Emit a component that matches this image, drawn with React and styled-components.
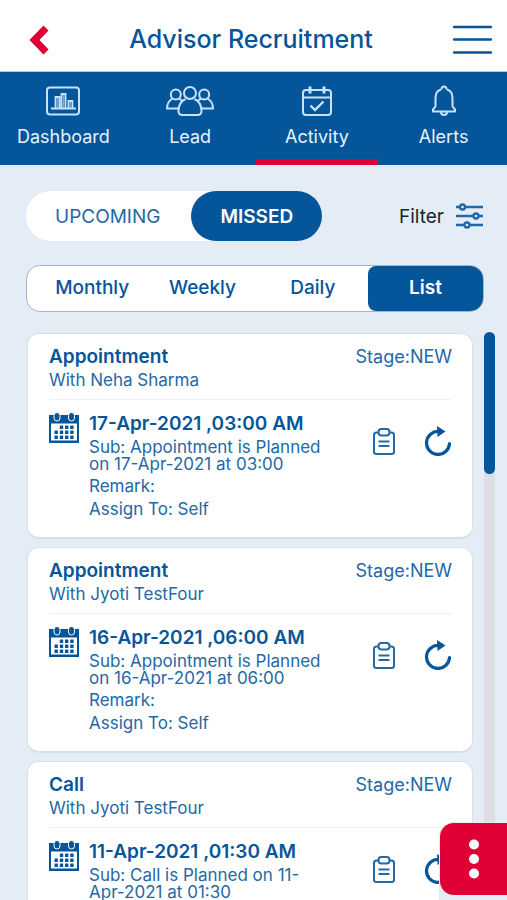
import React from 'react'
import styled, { createGlobalStyle, css } from 'styled-components'

const colors = {
  blue: '#05559b',
  text: '#2468a5',
  red: '#e00036',
  page: '#e4edf6',
  icon: '#c9e2f7',
}

const GlobalStyle = createGlobalStyle`
  * {
    box-sizing: border-box;
  }

  body {
    margin: 0;
    background: ${colors.page};
    color: ${colors.blue};
    font-family: Inter, 'Open Sans', sans-serif;
  }

  button {
    padding: 0;
    border: 0;
    background: none;
    color: inherit;
    font-family: inherit;
    cursor: pointer;
  }

  svg {
    display: block;
  }
`

const StyledPage = styled.div`
  display: flex;
  flex-direction: column;
  height: 100vh;
`

const StyledHeader = styled.header`
  display: flex;
  flex: none;
  align-items: center;
  justify-content: space-between;
  height: 72px;
  padding: 8px 15px 0 29px;
  border-bottom: 1px solid #b4cbe2;
  background: #fff;
`

const StyledTitle = styled.h1`
  margin: 0;
  padding-bottom: 2px;
  font-size: 25px;
  line-height: 28px;
  font-weight: 500;
`

const StyledNav = styled.nav`
  display: grid;
  flex: none;
  grid-template-columns: repeat(4, 1fr);
  height: 93px;
  background: ${colors.blue};
`

const StyledNavLink = styled.a`
  display: flex;
  flex-direction: column;
  align-items: center;
  gap: 8px;
  margin: 0 2px;
  padding-top: 13px;
  border-bottom: 6px solid ${props => (props.$active ? colors.red : 'transparent')};
  color: #e6f2fc;
  font-size: 18px;
  line-height: 24px;
  text-decoration: none;

  svg {
    color: ${colors.icon};
  }
`

const StyledToolbar = styled.div`
  display: flex;
  flex: none;
  align-items: center;
  justify-content: space-between;
  padding: 26px 24px 0 26px;
`

const StyledToggle = styled.div`
  display: flex;
  border-radius: 25px;
  background: #fff;
`

const StyledToggleButton = styled.button`
  height: 50px;
  padding: 0 29px;
  border-radius: 25px;
  font-size: 19px;
  color: ${colors.text};

  ${props =>
    props.$active &&
    css`
      margin-left: 2px;
      background: ${colors.blue};
      color: #fff;
      font-weight: 600;
    `};
`

const StyledFilter = styled.button`
  display: flex;
  align-items: center;
  gap: 12px;
  color: #20242c;
  font-size: 19px;

  svg {
    color: #2168ab;
  }
`

const StyledTabs = styled.div`
  display: grid;
  flex: none;
  grid-template-columns: 1fr 1fr 1fr 115px;
  height: 47px;
  margin: 24px 23px 0 26px;
  padding-left: 10px;
  border: 1px solid #a4b4cb;
  border-radius: 14px;
  background: #fff;
`

const StyledTab = styled.button`
  padding-bottom: 2px;
  font-size: 19px;
  font-weight: 500;

  ${props =>
    props.$active &&
    css`
      border-radius: 8px 13px 13px 8px;
      background: ${colors.blue};
      color: #fff;
      font-weight: 600;
    `};
`

const StyledContent = styled.main`
  display: flex;
  flex: 1;
  gap: 11px;
  min-height: 0;
  margin-top: 20px;
  padding: 0 12px 0 27px;
`

const StyledList = styled.div`
  display: flex;
  flex: 1;
  flex-direction: column;
  gap: 8px;
  min-width: 0;
  padding-top: 1px;
  overflow-y: auto;
  scrollbar-width: none;
`

const StyledTrack = styled.div`
  flex: none;
  width: 11px;
  border-radius: 6px 6px 0 0;
  background: #dcdfe2;
`

const StyledThumb = styled.div`
  height: 25%;
  border-radius: 6px;
  background: ${colors.blue};
`

const StyledCard = styled.article`
  flex: none;
  min-height: 206px;
  padding: 11px 20px 14px 21px;
  border: 1px solid #d9dfe6;
  border-bottom-width: 2px;
  border-radius: 12px;
  background: #fff;
`

const StyledCardHeader = styled.header`
  display: flex;
  justify-content: space-between;
  padding-bottom: 7px;
  border-bottom: 1px solid #f0f3f5;
`

const StyledCardTitle = styled.h2`
  margin: 0;
  font-size: 19px;
  line-height: 24px;
  font-weight: 600;
`

const StyledText = styled.p`
  margin: 0;
  color: ${colors.text};
  font-size: 17px;
  line-height: ${props => (props.$tight ? 17 : 23)}px;
`

const StyledStage = styled.span`
  color: ${colors.text};
  font-size: 18px;
  line-height: 24px;
`

const StyledCardBody = styled.div`
  display: flex;
  padding-top: 12px;
`

const StyledDetails = styled.div`
  flex: 1;
  padding-left: 10px;
`

const StyledDate = styled.h3`
  margin: 0 0 3px;
  font-size: 19px;
  line-height: 24px;
  font-weight: 600;
`

const StyledSubject = styled.div`
  max-width: 242px;
  margin-bottom: 2px;
`

const StyledActions = styled.div`
  display: flex;
  align-items: center;
  align-self: flex-start;
  gap: 29px;
  padding-top: 14px;
`

const StyledMore = styled.div`
  position: fixed;
  right: 0;
  bottom: 0;
  padding: 1px 0 5px 1px;
  border-radius: 14px 0 0 0;
  background: ${colors.page};
`

const StyledMoreButton = styled.button`
  display: grid;
  place-items: center;
  width: 67px;
  height: 72px;
  border-radius: 14px 0 0 14px;
  background: ${colors.red};
`

const Icon = ({ width, height, strokeWidth = 2, children }) => (
  <svg
    width={width}
    height={height}
    viewBox={`0 0 ${width} ${height}`}
    fill="none"
    stroke="currentColor"
    strokeWidth={strokeWidth}
    aria-hidden="true"
  >
    {children}
  </svg>
)

const BackIcon = () => (
  <svg width="20" height="30" viewBox="0 0 20 30" aria-hidden="true">
    <path d="M14.5 0.5 19.5 5.500 10.500 15 19.5 24.500 14.5 29.5 0.5 15Z" fill={colors.red} />
  </svg>
)

const MenuIcon = () => (
  <Icon width={39} height={30} strokeWidth={2.4}>
    <path d="M1 2h37M1 14.5h37M1 27.5h37" strokeLinecap="round" />
  </Icon>
)

const DashboardIcon = () => (
  <Icon width={34} height={32}>
    <rect x="1" y="2.5" width="32" height="27" rx="3" />
    <path d="M5 23.5h25M9.5 23V12h4v11M15.5 23V9h4v14M22.5 23v-7h4v7" strokeWidth="1.8" />
    <path d="M11.5 13v10M17.5 10v13M24.5 17v6" strokeWidth="1.4" opacity="0.6" />
  </Icon>
)

const LeadIcon = () => (
  <Icon width={48} height={32}>
    <circle cx="24" cy="8" r="6" />
    <circle cx="9.8" cy="9.500" r="5" />
    <circle cx="38.2" cy="9.500" r="5" />
    <path d="M19.500 14C15 16 12.5 20.500 12.5 26c0 2.5 1.5 4 4 4h15c2.500 0 4-1.500 4-4 0-5.500-2.500-10-7-12" />
    <path d="M6.500 13.500C3 15.500 1 18.500 1 23.500h11.500M13 13.500l4 3M41.500 13.500C45 15.500 47 18.500 47 23.500H35.500M35 13.500l-4 3" />
  </Icon>
)

const ActivityIcon = () => (
  <Icon width={30} height={32}>
    <rect x="1" y="5" width="28" height="25" rx="3" />
    <path d="M1 12.500h28" />
    <path d="M8 1.500v7M22 1.500v7" strokeWidth="3" />
    <path d="M8.500 20.500l4.500 4.500 8.500-8.500" strokeWidth="2.400" />
  </Icon>
)

const AlertsIcon = () => (
  <Icon width={26} height={32}>
    <path
      d="M10 4.500C6.500 5.500 4.500 9 4.500 13v8c0 1.500-2 2-2.500 3.500v2h22v-2c-.5-1.500-2.500-2-2.500-3.500v-8c0-4-2-7.500-5.500-8.500M10.500 4.500c0-4 5-4 5 0M10 27c0 4 6 4 6 0"
      strokeLinejoin="round"
    />
  </Icon>
)

const FilterIcon = () => (
  <Icon width={27} height={26} strokeWidth={2.4}>
    <path d="M0 4h4M9 4h18M0 13h17M23 13h4M0 22h8M14 22h13" />
    <circle cx="6.500" cy="4" r="2.500" />
    <circle cx="20" cy="13" r="2.500" />
    <circle cx="11" cy="22" r="2.500" />
  </Icon>
)

const CalendarIcon = () => (
  <svg width="30" height="32" viewBox="0 0 30 32" fill={colors.blue} aria-hidden="true">
    <path d="M0 3h30v28H0zM2 11.500v17h26v-17z" fillRule="evenodd" />
    <rect x="5" y="0.500" width="6" height="8.500" rx="3" stroke="#fff" />
    <rect x="19.500" y="0.500" width="6" height="8.500" rx="3" stroke="#fff" />
    {[13.5, 18.5, 23.5].map((y, row) =>
      [5.5, 10.8, 16, 21.2]
        .slice(row === 0 ? 1 : 0)
        .map(x => <rect key={`${x}-${y}`} x={x} y={y} width="3.400" height="3.400" rx="0.5" />)
    )}
  </svg>
)

const ClipboardIcon = () => (
  <Icon width={22} height={27}>
    <path
      d="M6 4.500H3.500C2 4.500 1 5.500 1 7v17c0 1.500 1 2 2.500 2h15c1.500 0 2.500-.5 2.500-2V7c0-1.500-1-2.500-2.500-2.500H16"
      stroke={colors.text}
    />
    <rect x="5.500" y="1" width="11" height="6.500" rx="3" stroke={colors.text} />
    <path d="M5.500 13.500h11M5.500 18h11" stroke={colors.text} />
  </Icon>
)

const RefreshIcon = () => (
  <Icon width={28} height={30} strokeWidth={3.2}>
    <path d="M15 5.500A11.500 11.500 0 1 0 25.500 17.500" strokeLinecap="round" />
    <path d="M13 0 21.500 5.500 13.500 11Z" fill="currentColor" stroke="none" />
  </Icon>
)

const navItems = [
  { label: 'Dashboard', icon: DashboardIcon },
  { label: 'Lead', icon: LeadIcon },
  { label: 'Activity', icon: ActivityIcon },
  { label: 'Alerts', icon: AlertsIcon },
]

const activities = [
  {
    title: 'Appointment',
    person: 'Neha Sharma',
    date: '17-Apr-2021 ,03:00 AM',
    subject: 'Appointment is Planned on 17-Apr-2021 at 03:00',
  },
  {
    title: 'Appointment',
    person: 'Jyoti TestFour',
    date: '16-Apr-2021 ,06:00 AM',
    subject: 'Appointment is Planned on 16-Apr-2021 at 06:00',
  },
  {
    title: 'Call',
    person: 'Jyoti TestFour',
    date: '11-Apr-2021 ,01:30 AM',
    subject: 'Call is Planned on 11-Apr-2021 at 01:30',
  },
]

const ActivityCard = ({ title, person, date, subject }) => (
  <StyledCard>
    <StyledCardHeader>
      <div>
        <StyledCardTitle>{title}</StyledCardTitle>
        <StyledText>With {person}</StyledText>
      </div>
      <StyledStage>Stage:NEW</StyledStage>
    </StyledCardHeader>
    <StyledCardBody>
      <CalendarIcon />
      <StyledDetails>
        <StyledDate>{date}</StyledDate>
        <StyledSubject>
          <StyledText $tight>Sub: {subject}</StyledText>
        </StyledSubject>
        <StyledText>Remark:</StyledText>
        <StyledText>Assign To: Self</StyledText>
      </StyledDetails>
      <StyledActions>
        <button type="button" aria-label="Notes">
          <ClipboardIcon />
        </button>
        <button type="button" aria-label="Reschedule">
          <RefreshIcon />
        </button>
      </StyledActions>
    </StyledCardBody>
  </StyledCard>
)

class App extends React.Component {
  state = { status: 'MISSED', view: 'List', scroll: 0 }

  handleScroll = event => {
    const { scrollTop, scrollHeight, clientHeight } = event.currentTarget
    this.setState({ scroll: scrollTop / Math.max(1, scrollHeight - clientHeight) })
  }

  render() {
    const { status, view, scroll } = this.state

    return (
      <StyledPage>
        <GlobalStyle />
        <StyledHeader>
          <button type="button" aria-label="Back">
            <BackIcon />
          </button>
          <StyledTitle>Advisor Recruitment</StyledTitle>
          <button type="button" aria-label="Menu">
            <MenuIcon />
          </button>
        </StyledHeader>
        <StyledNav>
          {navItems.map(({ label, icon: NavIcon }) => (
            <StyledNavLink key={label} href={`#${label.toLowerCase()}`} $active={label === 'Activity'}>
              <NavIcon />
              {label}
            </StyledNavLink>
          ))}
        </StyledNav>
        <StyledToolbar>
          <StyledToggle>
            {['UPCOMING', 'MISSED'].map(name => (
              <StyledToggleButton
                key={name}
                type="button"
                aria-pressed={status === name}
                $active={status === name}
                onClick={() => this.setState({ status: name })}
              >
                {name}
              </StyledToggleButton>
            ))}
          </StyledToggle>
          <StyledFilter type="button">
            Filter
            <FilterIcon />
          </StyledFilter>
        </StyledToolbar>
        <StyledTabs>
          {['Monthly', 'Weekly', 'Daily', 'List'].map(name => (
            <StyledTab
              key={name}
              type="button"
              aria-pressed={view === name}
              $active={view === name}
              onClick={() => this.setState({ view: name })}
            >
              {name}
            </StyledTab>
          ))}
        </StyledTabs>
        <StyledContent>
          <StyledList onScroll={this.handleScroll}>
            {activities.map(activity => (
              <ActivityCard key={activity.date} {...activity} />
            ))}
          </StyledList>
          <StyledTrack>
            {/* the thumb is a quarter of the track, so it can travel three times its height */}
            <StyledThumb style={{ transform: `translateY(${scroll * 300}%)` }} />
          </StyledTrack>
        </StyledContent>
        <StyledMore>
          <StyledMoreButton type="button" aria-label="More actions">
            <svg width="12" height="40" viewBox="0 0 12 40" fill="#fff" aria-hidden="true">
              <circle cx="6" cy="5.500" r="5" />
              <circle cx="6" cy="20" r="5" />
              <circle cx="6" cy="34.500" r="5" />
            </svg>
          </StyledMoreButton>
        </StyledMore>
      </StyledPage>
    )
  }
}

export default App
